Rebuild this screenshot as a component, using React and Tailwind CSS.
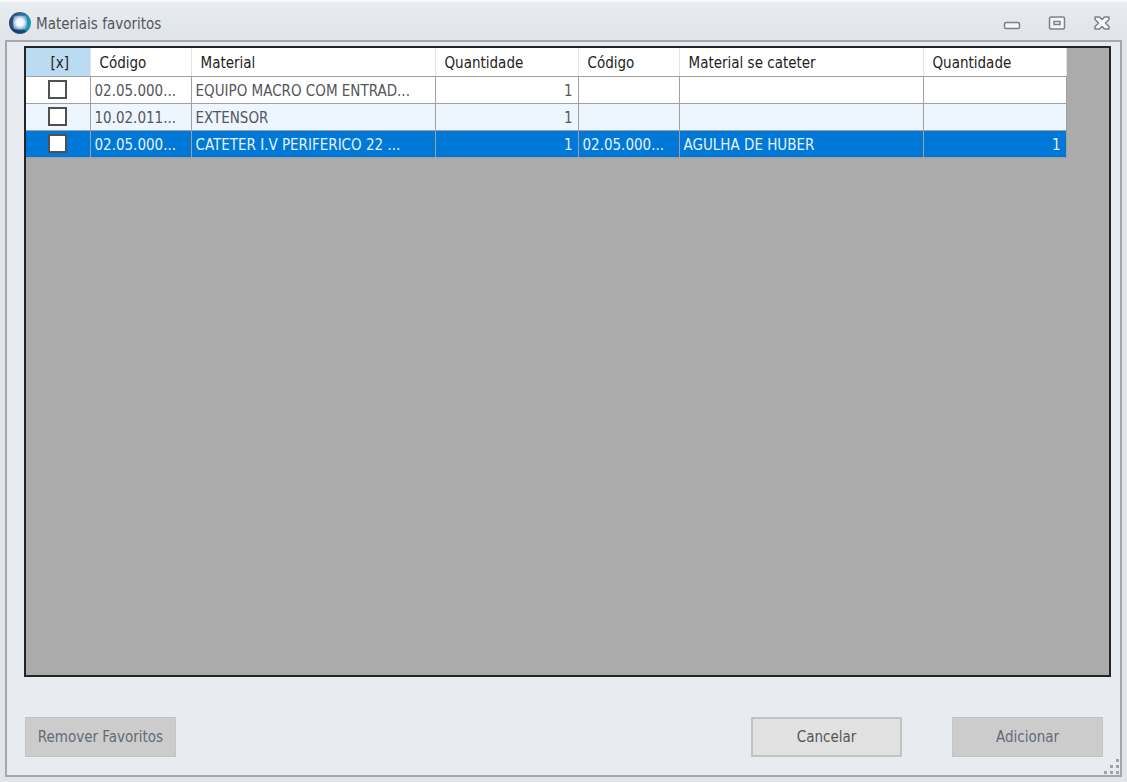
import { useState } from "react";

const columns = [
  { label: "[x]", width: 64 },
  { label: "Código", width: 101 },
  { label: "Material", width: 244 },
  { label: "Quantidade", width: 143 },
  { label: "Código", width: 101 },
  { label: "Material se cateter", width: 244 },
  { label: "Quantidade", width: 143 },
];

const rows = [
  ["02.05.000...", "EQUIPO MACRO COM ENTRAD...", "1", "", "", ""],
  ["10.02.011...", "EXTENSOR", "1", "", "", ""],
  ["02.05.000...", "CATETER I.V PERIFERICO 22 ...", "1", "02.05.000...", "AGULHA DE HUBER", "1"],
];

const rowStyles = [
  "bg-white text-[#55555a]",
  "bg-[#edf6ff] text-[#55555a]",
  "bg-[#0078d7] text-[#e6f2fc]",
];

function Logo() {
  return (
    <svg className="size-[24px]" viewBox="0 0 24 24" aria-hidden="true">
      <defs>
        <linearGradient id="ring" x1="0" y1="0.3" x2="1" y2="0.5">
          <stop offset="0" stopColor="#33406f" />
          <stop offset="0.5" stopColor="#2b6c98" />
          <stop offset="1" stopColor="#189fbd" />
        </linearGradient>
        <radialGradient id="core">
          <stop offset="0" stopColor="#ffffff" />
          <stop offset="0.55" stopColor="#eef3fa" />
          <stop offset="1" stopColor="#7fb2d2" />
        </radialGradient>
      </defs>
      <circle cx="12" cy="12" r="11" fill="url(#ring)" />
      <path d="M2 16a11 11 0 0 0 17 4l-4-1c-5 1-9 0-13-3Z" fill="#1f2750" opacity="0.7" />
      <path d="M6 5.500q6-2 12 0 2 6 0 12-6 2-12 0-2-6 0-12Z" fill="url(#core)" />
    </svg>
  );
}

function CaptionButton({ label, children }) {
  return (
    <button type="button" aria-label={label} className="flex h-5 w-[45px] items-center justify-center">
      <svg className="size-[18px]" viewBox="0 0 18 18" fill="none" stroke="#7c8287" strokeWidth="1.5">
        {children}
      </svg>
    </button>
  );
}

function ActionButton({ children, disabled }) {
  return (
    <button
      type="button"
      disabled={disabled}
      className={
        disabled
          ? "h-10 w-[151px] border border-[#c3c3c3] bg-[#cccccc] text-[#626b7a]"
          : "h-10 w-[151px] border-2 border-[#c3c3c3] bg-[#e1e1e1] text-[#55565a]"
      }
    >
      {children}
    </button>
  );
}

export default function App() {
  const [checked, setChecked] = useState([false, false, false]);
  const toggle = (i) => setChecked(checked.map((c, n) => (n === i ? !c : c)));

  return (
    <div className="flex h-screen flex-col border-t-2 border-[#f6f8f9] bg-[#e2e6ea] px-[5px] pb-[5px] font-['DejaVu_Sans_Condensed','DejaVu_Sans',sans-serif] text-[15px] leading-5">
      <header className="-mx-[5px] flex h-[38px] shrink-0 items-center justify-between bg-linear-to-b from-[#e9ecf0] to-[#e0e4e8] pt-1 pr-[3px] pl-2">
        <div className="flex items-center gap-1">
          <Logo />
          <h1 className="pt-px text-[#55565a]">Materiais favoritos</h1>
        </div>
        <div className="flex">
          <CaptionButton label="Minimizar">
            <rect x="1.500" y="8.500" width="15" height="6" rx="1.500" fill="#f4f6f8" />
          </CaptionButton>
          <CaptionButton label="Maximizar">
            <rect x="1.500" y="3" width="15" height="12" rx="1.500" fill="#f4f6f8" />
            <rect x="6" y="7.500" width="6" height="3" />
          </CaptionButton>
          <CaptionButton label="Fechar">
            <path
              d="M2 3h4.500L9 5.500 11.500 3H16v2.500L12.500 9l3.500 3.500V15h-4.500L9 12.500 6.500 15H2v-2.500L5.500 9 2 5.500Z"
              fill="#f4f6f8"
              strokeLinejoin="round"
            />
          </CaptionButton>
        </div>
      </header>

      <main className="relative flex min-h-0 flex-1 flex-col border-2 border-[#a4a8ad] bg-[#e8ecf1] pt-1 pr-[9px] pb-[18px] pl-[17px]">
        <div className="min-h-0 flex-1 overflow-hidden border-2 border-[#252525] bg-[#ababab]">
          <table className="w-[1040px] table-fixed border-collapse">
            <colgroup>
              {columns.map((c, i) => (
                <col key={i} style={{ width: c.width }} />
              ))}
            </colgroup>
            <thead>
              <tr className="h-7 bg-white text-[#222222]">
                {columns.map((c, i) => (
                  <th
                    key={i}
                    scope="col"
                    className={
                      i === 0
                        ? "border-r border-b border-r-[#e3e3e3] border-b-[#a0a0a0] bg-[#bbdbf2] pt-0.5 pl-1 text-center font-normal"
                        : "border-r border-b border-r-[#e3e3e3] border-b-[#a0a0a0] pt-0.5 pl-[9px] text-left font-normal"
                    }
                  >
                    {c.label}
                  </th>
                ))}
              </tr>
            </thead>
            <tbody>
              {rows.map((row, i) => (
                <tr key={i} className={`h-[27px] ${rowStyles[i]}`}>
                  <td className="border-r border-b border-[#a0a0a0]">
                    <input
                      type="checkbox"
                      aria-label={`Selecionar ${row[1]}`}
                      checked={checked[i]}
                      onChange={() => toggle(i)}
                      className="mx-auto block size-[19px] appearance-none border-2 border-[#505050] bg-white checked:bg-[#0078d7]"
                    />
                  </td>
                  {row.map((cell, n) => (
                    <td
                      key={n}
                      className={
                        n === 2 || n === 5
                          ? "border-r border-b border-[#a0a0a0] pt-0.5 pr-[5px] text-right"
                          : "overflow-hidden border-r border-b border-[#a0a0a0] pt-0.5 pl-1 whitespace-nowrap"
                      }
                    >
                      {cell}
                    </td>
                  ))}
                </tr>
              ))}
            </tbody>
          </table>
        </div>

        <footer className="flex shrink-0 items-center justify-between pt-10 pr-2 pl-px">
          <ActionButton disabled>Remover Favoritos</ActionButton>
          <div className="flex gap-[50px]">
            <ActionButton>Cancelar</ActionButton>
            <ActionButton disabled>Adicionar</ActionButton>
          </div>
        </footer>

        <svg className="absolute right-0 bottom-0 size-4" viewBox="0 0 16 16" fill="#9fa3a8" aria-hidden="true">
          <path d="M12 0h3v3h-3zM6 6h3v3H6zM12 6h3v3h-3zM0 12h3v3H0zM6 12h3v3H6zM12 12h3v3h-3z" />
        </svg>
      </main>
    </div>
  );
}
